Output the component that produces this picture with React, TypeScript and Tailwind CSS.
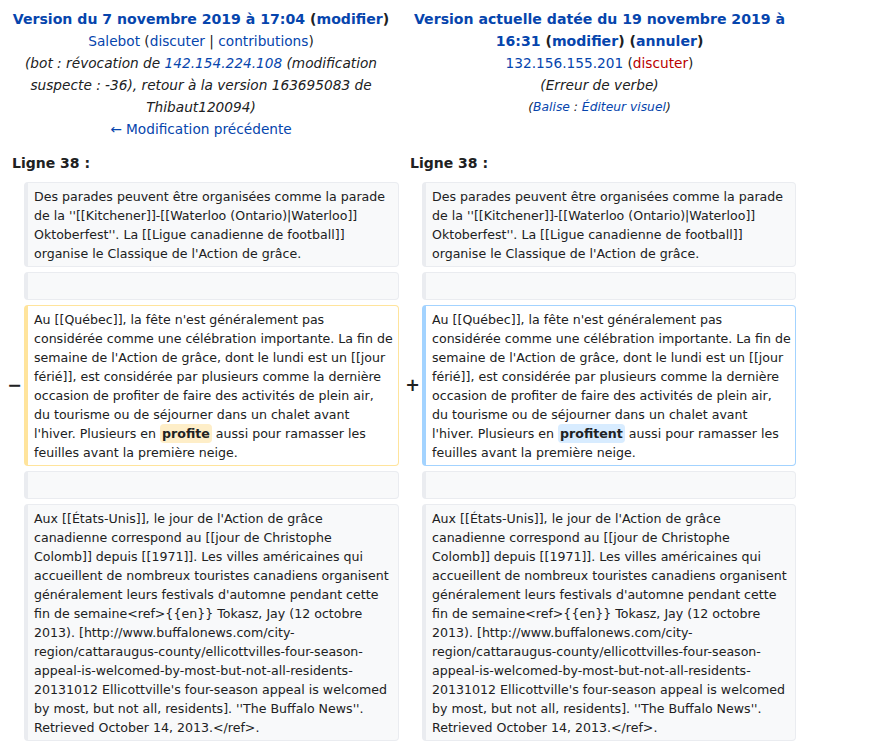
import React from 'react';

const link = 'text-[#0645ad]';

const ctx1 =
  "Des parades peuvent être organisées comme la parade de la ''[[Kitchener]]-[[Waterloo (Ontario)|Waterloo]] Oktoberfest''. La [[Ligue canadienne de football]] organise le Classique de l'Action de grâce.";

const ctx3 =
  "Aux [[États-Unis]], le jour de l'Action de grâce canadienne correspond au [[jour de Christophe Colomb]] depuis [[1971]]. Les villes américaines qui accueillent de nombreux touristes canadiens organisent généralement leurs festivals d'automne pendant cette fin de semaine<ref>{{en}} Tokasz, Jay (12 octobre 2013). [http://www.buffalonews.com/city-region/cattaraugus-county/ellicottvilles-four-season-appeal-is-welcomed-by-most-but-not-all-residents-20131012 Ellicottville's four-season appeal is welcomed by most, but not all, residents]. ''The Buffalo News''. Retrieved October 14, 2013.</ref>.";

// lines of the changed paragraph, broken where the diff view breaks them
const changedLines = [
  "Au [[Québec]], la fête n'est généralement pas",
  'considérée comme une célébration importante. La fin de',
  "semaine de l'Action de grâce, dont le lundi est un [[jour",
  'férié]], est considérée par plusieurs comme la dernière',
  'occasion de profiter de faire des activités de plein air,',
  'du tourisme ou de séjourner dans un chalet avant',
];

function Context({ text }: { text?: string }) {
  return (
    <div className="rounded-[4px] border border-l-4 border-[#eaecf0] bg-[#f8f9fa] px-[6px] py-[3.5px] leading-[19px] break-words">
      {text ?? <br />}
    </div>
  );
}

function Changed({ word, added }: { word: string; added?: boolean }) {
  return (
    <div
      className={`whitespace-nowrap rounded-[4px] border border-l-4 bg-white px-[6px] py-[3.5px] leading-[19px] ${
        added ? 'border-[#a3d3ff]' : 'border-[#ffe49c]'
      }`}
    >
      {changedLines.map((line) => (
        <div key={line}>{line}</div>
      ))}
      <div>
        l'hiver. Plusieurs en{' '}
        <span className={`rounded-[4px] px-[2px] py-[2px] font-bold ${added ? 'bg-[#d8ecff]' : 'bg-[#feeec8]'}`}>
          {word}
        </span>{' '}
        aussi pour ramasser les
      </div>
      <div>feuilles avant la première neige.</div>
    </div>
  );
}

function Marker({ sign }: { sign?: string }) {
  return (
    <div className="flex items-center justify-end pr-[2px] text-[17.5px] font-bold leading-none">
      {sign}
    </div>
  );
}

export default function App() {
  return (
    <div className="min-h-[746px] w-[874px] bg-white font-['DejaVu_Sans',sans-serif] text-[#202122]">
      <div className="flex pt-[8px] text-[13.7px] leading-[22px]">
        <div className="w-[402px] text-center">
          <div className="text-[14.1px] font-bold">
            <span className={link}>Version du 7 novembre 2019 à 17:04</span> (
            <span className={link}>modifier</span>)
          </div>
          <div>
            <span className={link}>Salebot</span> (<span className={link}>discuter</span> |{' '}
            <span className={link}>contributions</span>)
          </div>
          <div className="italic">
            (bot : révocation de <span className={link}>142.154.224.108</span> (modification suspecte : -36),
            retour à la version 163695083 de Thibaut120094)
          </div>
          <div>
            <span className={link}>← Modification précédente</span>
          </div>
        </div>
        <div className="w-[395px] text-center">
          <div className="text-[14.1px] font-bold">
            <span className={link}>Version actuelle datée du 19 novembre 2019 à 16:31</span> (
            <span className={link}>modifier</span>) (<span className={link}>annuler</span>)
          </div>
          <div>
            <span className={link}>132.156.155.201</span> (<span className="text-[#ba0000]">discuter</span>)
          </div>
          <div className="italic">(Erreur de verbe)</div>
          <div className="text-[12.3px] italic">
            (<span className={link}>Balise</span> : <span className={link}>Éditeur visuel</span>)
          </div>
        </div>
      </div>

      <div className="grid grid-cols-[24px_375px_23px_374px] gap-y-[5px] text-[12.6px]">
        <div className="col-span-2 mt-[12px] mb-[3px] pl-[12px] text-[14px] font-bold leading-[22px]">Ligne 38 :</div>
        <div className="col-span-2 mt-[12px] mb-[3px] pl-[11px] text-[14px] font-bold leading-[22px]">Ligne 38 :</div>

        <Marker />
        <Context text={ctx1} />
        <Marker />
        <Context text={ctx1} />

        <Marker />
        <Context />
        <Marker />
        <Context />

        <Marker sign="−" />
        <Changed word="profite" />
        <Marker sign="+" />
        <Changed word="profitent" added />

        <Marker />
        <Context />
        <Marker />
        <Context />

        <Marker />
        <Context text={ctx3} />
        <Marker />
        <Context text={ctx3} />
      </div>
    </div>
  );
}
